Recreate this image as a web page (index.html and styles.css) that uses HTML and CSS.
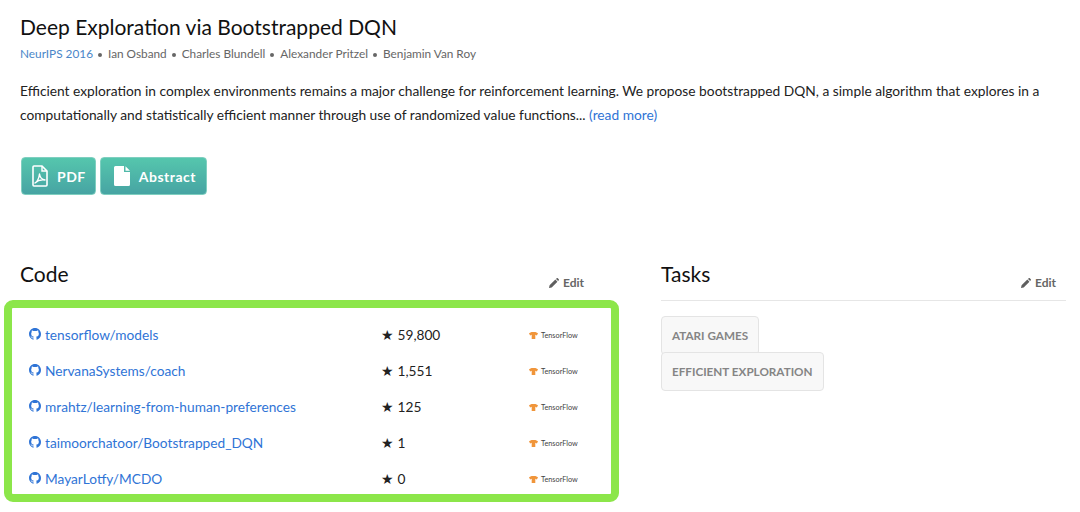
FILE: index.html
```html
<!DOCTYPE html>
<html lang="en">
<head>
  <meta charset="UTF-8" />
  <title>Deep Exploration via Bootstrapped DQN</title>
  <link rel="stylesheet" href="styles.css">
</head>
<body>

  <!-- Paper -->
  <h1 class="title">Deep Exploration via Bootstrapped DQN</h1>
  <div class="meta">
    <a href="#">NeurIPS 2016</a><span class="dot"></span>Ian Osband<span class="dot"></span>Charles Blundell<span class="dot"></span>Alexander Pritzel<span class="dot"></span>Benjamin Van Roy
  </div>
  <p class="abstract">Efficient exploration in complex environments remains a major challenge for reinforcement learning. We propose bootstrapped DQN, a simple algorithm that explores in a computationally and statistically efficient manner through use of randomized value functions... <a href="#">(read more)</a></p>

  <div class="buttons">
    <a class="btn btn-pdf" href="#">
      <svg class="btn-icon" viewBox="0 0 16 22" width="16" height="22"><path d="M2 1h8l5 5v14a1 1 0 0 1-1 1H2a1 1 0 0 1-1-1V2a1 1 0 0 1 1-1z" fill="none" stroke="#fff" stroke-width="1.6"/><path d="M10 1v5h5" fill="none" stroke="#fff" stroke-width="1.4"/><path d="M3 18c2.500-1.500 4-5 4.500-9 .5 3.500 2.500 5.500 5.500 6-3.500-.5-7.500.5-10 3z" fill="none" stroke="#fff" stroke-width="1.400" stroke-linejoin="round"/></svg>
      PDF
    </a>
    <a class="btn btn-abstract" href="#">
      <svg class="btn-icon" viewBox="0 0 16 20" width="16" height="20"><path d="M1.500 0H10v6h6v12.500a1.500 1.500 0 0 1-1.500 1.500h-13A1.500 1.500 0 0 1 0 18.500v-17A1.500 1.500 0 0 1 1.500 0zM11.500 0.300L16 4.700h-4.500z" fill="#fff"/></svg>
      Abstract
    </a>
  </div>

  <div class="columns">
    <!-- Code -->
    <section class="col-code">
      <div class="section-head">
        <h2>Code</h2>
        <a class="edit" href="#"><svg viewBox="0 0 12 12" width="10" height="10"><path d="M0 12l.7-3.200L7.600 1.900l2.500 2.500-6.900 6.900zM8.400 1.100l.8-.8a1 1 0 0 1 1.400 0l1.100 1.100a1 1 0 0 1 0 1.400l-.8.8z" fill="#5f5f5f"/></svg>Edit</a>
      </div>
      <div class="repos">
        <div class="repo">
          <a class="repo-name" href="#"><svg class="gh" viewBox="0 0 16 16" width="12" height="12"><use href="#gh-mark"/></svg>tensorflow/models</a>
          <span class="stars">★ 59,800</span>
          <span class="fw"><svg viewBox="0 0 10 10" width="9" height="9"><use href="#tf-mark"/></svg>TensorFlow</span>
        </div>
        <div class="repo">
          <a class="repo-name" href="#"><svg class="gh" viewBox="0 0 16 16" width="12" height="12"><use href="#gh-mark"/></svg>NervanaSystems/coach</a>
          <span class="stars">★ 1,551</span>
          <span class="fw"><svg viewBox="0 0 10 10" width="9" height="9"><use href="#tf-mark"/></svg>TensorFlow</span>
        </div>
        <div class="repo">
          <a class="repo-name" href="#"><svg class="gh" viewBox="0 0 16 16" width="12" height="12"><use href="#gh-mark"/></svg>mrahtz/learning-from-human-preferences</a>
          <span class="stars">★ 125</span>
          <span class="fw"><svg viewBox="0 0 10 10" width="9" height="9"><use href="#tf-mark"/></svg>TensorFlow</span>
        </div>
        <div class="repo">
          <a class="repo-name" href="#"><svg class="gh" viewBox="0 0 16 16" width="12" height="12"><use href="#gh-mark"/></svg>taimoorchatoor/Bootstrapped_DQN</a>
          <span class="stars">★ 1</span>
          <span class="fw"><svg viewBox="0 0 10 10" width="9" height="9"><use href="#tf-mark"/></svg>TensorFlow</span>
        </div>
        <div class="repo">
          <a class="repo-name" href="#"><svg class="gh" viewBox="0 0 16 16" width="12" height="12"><use href="#gh-mark"/></svg>MayarLotfy/MCDO</a>
          <span class="stars">★ 0</span>
          <span class="fw"><svg viewBox="0 0 10 10" width="9" height="9"><use href="#tf-mark"/></svg>TensorFlow</span>
        </div>
      </div>
    </section>

    <!-- Tasks -->
    <section class="col-tasks">
      <div class="section-head tasks-head">
        <h2>Tasks</h2>
        <a class="edit" href="#"><svg viewBox="0 0 12 12" width="10" height="10"><path d="M0 12l.7-3.200L7.600 1.900l2.500 2.500-6.900 6.900zM8.400 1.100l.8-.8a1 1 0 0 1 1.400 0l1.100 1.100a1 1 0 0 1 0 1.400l-.8.8z" fill="#5f5f5f"/></svg>Edit</a>
      </div>
      <div class="tags">
        <a class="tag" href="#">ATARI GAMES</a>
        <a class="tag" href="#">EFFICIENT EXPLORATION</a>
      </div>
    </section>
  </div>

  <!-- shared icons -->
  <svg class="defs" width="0" height="0">
    <defs>
      <path id="gh-mark" fill="#2f74d6" d="M8 0C3.580 0 0 3.580 0 8c0 3.540 2.290 6.530 5.470 7.590.4.070.55-.17.55-.38 0-.19-.01-.82-.01-1.490-2.010.37-2.530-.49-2.690-.94-.09-.23-.48-.94-.82-1.130-.28-.15-.68-.52-.01-.53.63-.01 1.080.58 1.230.82.720 1.210 1.870.87 2.330.66.070-.52.280-.87.510-1.070-1.780-.2-3.640-.89-3.640-3.950 0-.87.310-1.590.820-2.150-.08-.2-.36-1.020.08-2.120 0 0 .67-.21 2.200.82.640-.18 1.320-.27 2-.27.680 0 1.360.09 2 .27 1.530-1.040 2.200-.82 2.200-.82.440 1.100.160 1.920.080 2.120.510.560.820 1.270.820 2.150 0 3.070-1.870 3.750-3.650 3.950.290.250.540.730.540 1.480 0 1.070-.01 1.930-.01 2.200 0 .210.150.460.550.380A8.013 8.013 0 0016 8c0-4.420-3.580-8-8-8z"/>
      <path id="tf-mark" fill="#f0953a" d="M0 2.500L2.800 1h4.400L10 2.500 8.800 5 7 4.200V9H3V4.200L1.200 5z"/>
    </defs>
  </svg>

</body>
</html>
```

FILE: styles.css
```css
body {
  margin: 0;
  padding: 16px 14px 0 20px;
  font-family: Lato, "Open Sans", sans-serif;
  background: #fff;
  color: #1a1a1a;
}
a {
  color: #2f74d6;
  text-decoration: none;
}
.title {
  margin: 0;
  font-size: 21px;
  line-height: 22px;
  font-weight: 400;
  color: #111;
}
.meta {
  margin-top: 9px;
  font-size: 11.8px;
  line-height: 14px;
  color: #666;
}
.meta a {
  color: #4a86c8;
}
.dot {
  display: inline-block;
  width: 4px;
  height: 4px;
  margin: 0 6px 1px 5px;
  border-radius: 50%;
  background: #666;
}
.abstract {
  margin: 18px 0 0;
  font-size: 13.77px;
  line-height: 24px;
  color: #222;
}
.buttons {
  display: flex;
  gap: 4px;
  margin-top: 30px;
  padding-left: 1px;
}
.btn {
  display: flex;
  align-items: center;
  gap: 9px;
  height: 38px;
  padding: 0 10px;
  box-sizing: border-box;
  border-radius: 4px;
  border: 1px solid #7fcfc0;
  background: linear-gradient(#55c6ad, #47a4a3);
  color: #fff;
  font-size: 14px;
  font-weight: 700;
  letter-spacing: 0.5px;
}
.btn-pdf {
  padding-right: 9px;
}
.btn-abstract {
  padding-left: 13px;
}
.btn-icon {
  flex: none;
}
.columns {
  display: flex;
  margin-top: 67px;
}
.col-code {
  width: 564px;
  flex: none;
}
.col-tasks {
  margin-left: 77px;
  flex: 1;
}
.section-head {
  display: flex;
  justify-content: space-between;
  align-items: flex-end;
  height: 30px;
  padding-bottom: 8px;
}
.tasks-head {
  padding-right: 10px;
  border-bottom: 1px solid #e6e6e6;
}
h2 {
  margin: 0 0 5px;
  font-size: 21px;
  line-height: 26px;
  font-weight: 400;
  color: #111;
}
.edit {
  display: flex;
  align-items: center;
  gap: 4px;
  margin-bottom: 2px;
  font-size: 12px;
  font-weight: 700;
  color: #666;
}
.repos {
  box-sizing: border-box;
  width: 615px;
  height: 202px;
  margin: 0 0 0 -16px;
  padding: 8px 0 0 17px;
  border: 8px solid #8ce64a;
  border-radius: 9px;
}
.repo {
  display: flex;
  align-items: center;
  height: 36px;
}
.repo-name {
  display: flex;
  align-items: center;
  gap: 4px;
  width: 352px;
  font-size: 13.7px;
}
.stars {
  width: 148px;
  font-size: 13.7px;
  color: #222;
}
.fw {
  display: flex;
  align-items: center;
  gap: 3px;
  margin-top: 3px;
  font-size: 7.3px;
  color: #444;
}
.tags {
  padding-top: 15px;
}
.tag {
  display: table;
  box-sizing: border-box;
  height: 38px;
  margin-bottom: -3px;
  padding: 0 10px;
  line-height: 37px;
  border: 1px solid #e4e4e4;
  border-radius: 4px;
  background: #f8f8f8;
  color: #858585;
  font-size: 11.7px;
  font-weight: 700;
}
.defs {
  position: absolute;
}
```
